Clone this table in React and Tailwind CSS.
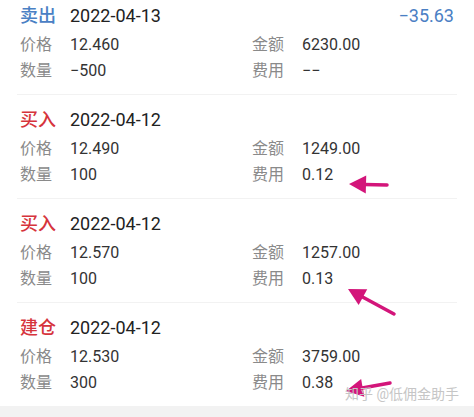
const trades = [
  { type: "卖出", color: "text-[#4a80c4]", date: "2022-04-13", change: "−35.63", price: "12.460", amount: "6230.00", qty: "−500", fee: "−−" },
  { type: "买入", color: "text-[#d6343c]", date: "2022-04-12", price: "12.490", amount: "1249.00", qty: "100", fee: "0.12" },
  { type: "买入", color: "text-[#d6343c]", date: "2022-04-12", price: "12.570", amount: "1257.00", qty: "100", fee: "0.13" },
  { type: "建仓", color: "text-[#d6343c]", date: "2022-04-12", price: "12.530", amount: "3759.00", qty: "300", fee: "0.38" },
];

// arrows drawn on top of the screenshot
const arrows = [
  { tip: [349, 184], tail: [387, 185] },
  { tip: [348, 289], tail: [394, 314] },
  { tip: [346, 391], tail: [390, 383] },
];

const Arrow = ({ tip, tail }) => {
  const dx = tail[0] - tip[0];
  const dy = tail[1] - tip[1];
  const len = Math.hypot(dx, dy);
  const ux = dx / len;
  const uy = dy / len;
  const head = 17;
  const half = 9;
  const bx = tip[0] + ux * head;
  const by = tip[1] + uy * head;
  const pts = [
    [tip[0], tip[1]],
    [bx - uy * half, by + ux * half],
    [bx + uy * half, by - ux * half],
  ].map((p) => p.join(",")).join(" ");
  return (
    <g>
      <line x1={bx - ux * 2} y1={by - uy * 2} x2={tail[0]} y2={tail[1]} stroke="#d3157a" strokeWidth="3.5" strokeLinecap="round" />
      <polygon points={pts} fill="#d3157a" />
    </g>
  );
};

const Field = ({ label, value, wide }) => (
  <div className={`flex items-center ${wide ? "w-[232px]" : ""}`}>
    <span className="w-[50px] text-[#8a8a8a]">{label}</span>
    <span className="text-[#333]">{value}</span>
  </div>
);

const TradeItem = ({ t, last }) => (
  <div className={`mx-[17px] px-[3px] pt-[12px] pb-[10px] ${last ? "" : "border-b border-[#f2f2f2]"}`}>
    <div className="flex items-center h-[24px] text-[18px]">
      <span className={`w-[50px] font-medium ${t.color}`}>{t.type}</span>
      <span className="text-[#222]">{t.date}</span>
      {t.change && <span className="ml-auto text-[#4a80c4]">{t.change}</span>}
    </div>
    <div className="mt-[5px] text-[16px]">
      <div className="flex h-[26px] items-center">
        <Field label="价格" value={t.price} wide />
        <Field label="金额" value={t.amount} />
      </div>
      <div className="flex h-[26px] items-center">
        <Field label="数量" value={t.qty} wide />
        <Field label="费用" value={t.fee} />
      </div>
    </div>
  </div>
);

export default function App() {
  return (
    <div className="relative w-[474px] h-[417px] overflow-hidden bg-white font-['Roboto','Noto_Sans_CJK_SC',sans-serif]">
      <div className="-mt-[9px]">
        {trades.map((t, i) => (
          <TradeItem key={i} t={t} last={i === trades.length - 1} />
        ))}
        <div className="h-[20px] bg-[#f2f2f2]"></div>
      </div>

      <svg className="absolute left-0 top-0 pointer-events-none" width="474" height="417">
        {arrows.map((a, i) => (
          <Arrow key={i} {...a} />
        ))}
      </svg>

      <div className="absolute left-[345px] top-[385px] text-[14px] leading-[18px] text-[#c6c6c6] whitespace-nowrap">
        知乎 @低佣金助手
      </div>
    </div>
  );
}
